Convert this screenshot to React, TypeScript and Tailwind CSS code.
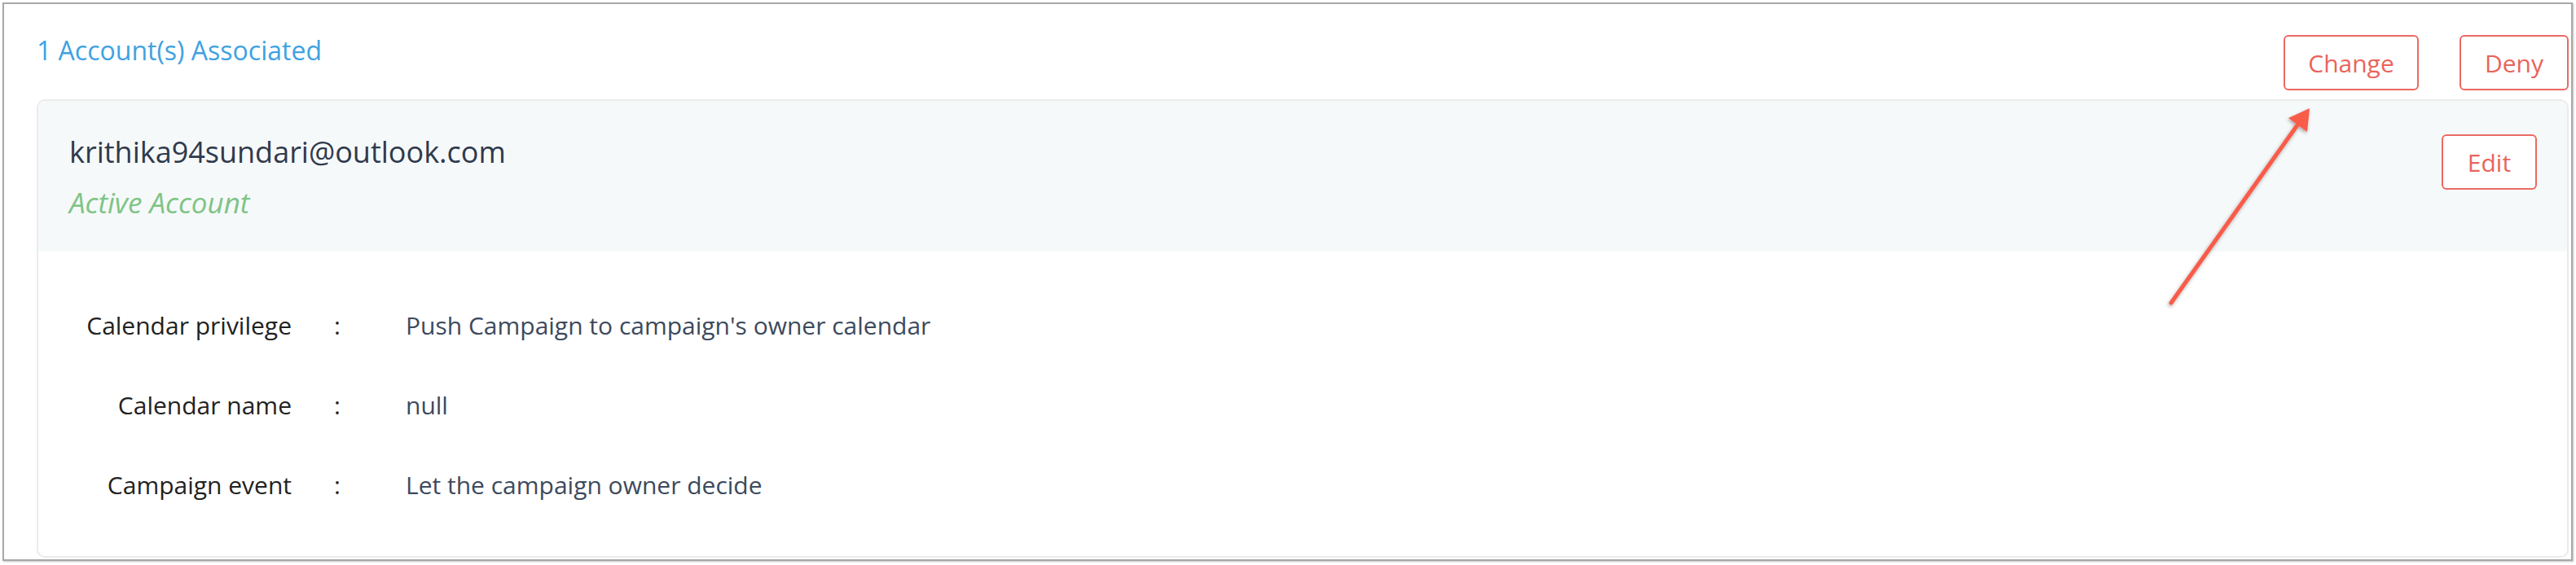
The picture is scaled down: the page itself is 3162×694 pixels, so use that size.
const rows = [
  { label: "Calendar privilege", value: "Push Campaign to campaign's owner calendar" },
  { label: "Calendar name", value: "null" },
  { label: "Campaign event", value: "Let the campaign owner decide" },
];

function OutlineButton({ label, className }: { label: string; className: string }) {
  return (
    <button
      className={`h-[68px] rounded-[6px] border-2 border-[#ea6a62] bg-white text-[30px] text-[#e9645c] flex items-center justify-center ${className}`}
    >
      {label}
    </button>
  );
}

function Arrow() {
  return (
    <svg
      className="absolute left-[2640px] top-[110px] pointer-events-none"
      width="220"
      height="280"
      viewBox="2640 110 220 280"
    >
      <defs>
        <filter id="sh" x="-20%" y="-20%" width="140%" height="140%">
          <feDropShadow dx="-1" dy="2" stdDeviation="2" floodColor="#000" floodOpacity="0.35" />
        </filter>
      </defs>
      <g filter="url(#sh)">
        <line x1="2665" y1="372" x2="2824" y2="148" stroke="#f85b4a" strokeWidth="5" strokeLinecap="round" />
        <polygon points="2835,133 2809,145 2832,162" fill="#f85b4a" />
      </g>
    </svg>
  );
}

export default function App() {
  return (
    <div className="relative w-[3162px] h-[694px] bg-white pt-[3px] pl-[3px] font-['Open_Sans',sans-serif]">
      <div className="w-[3155px] h-[686px] border-2 border-[#a8a8a8] shadow-[1px_1px_2px_rgba(0,0,0,0.25)] pl-[40px] pr-[3px]">
        <div className="flex justify-between h-[117px]">
          <div className="pt-[37px] text-[32px] leading-[40px] text-[#40a2e1]">1 Account(s) Associated</div>
          <div className="flex gap-[50px] pt-[38px]">
            <OutlineButton label="Change" className="w-[166px]" />
            <OutlineButton label="Deny" className="w-[134px]" />
          </div>
        </div>

        <div className="h-[563px] border-2 border-[#ebebeb] rounded-[10px] overflow-hidden">
          <div className="flex justify-between bg-[#f6f9fa] h-[185px] pl-[38px] pr-[37px]">
            <div className="pt-[39px]">
              <div className="text-[36px] leading-[48px] text-[#2f3a4c]">krithika94sundari@outlook.com</div>
              <div className="mt-[18px] text-[35px] leading-[40px] italic text-[#7ec486]">Active Account</div>
            </div>
            <div className="pt-[41px]">
              <OutlineButton label="Edit" className="w-[117px]" />
            </div>
          </div>

          <div className="flex flex-col gap-[58px] pt-[71px]">
            {rows.map((r) => (
              <div key={r.label} className="flex text-[30px] leading-[40px]">
                <div className="w-[311px] text-right text-[#222]">{r.label}</div>
                <div className="w-[140px] pl-[52px] text-[#222]">:</div>
                <div className="text-[#3d4a5c]">{r.value}</div>
              </div>
            ))}
          </div>
        </div>
      </div>
      <Arrow />
    </div>
  );
}
